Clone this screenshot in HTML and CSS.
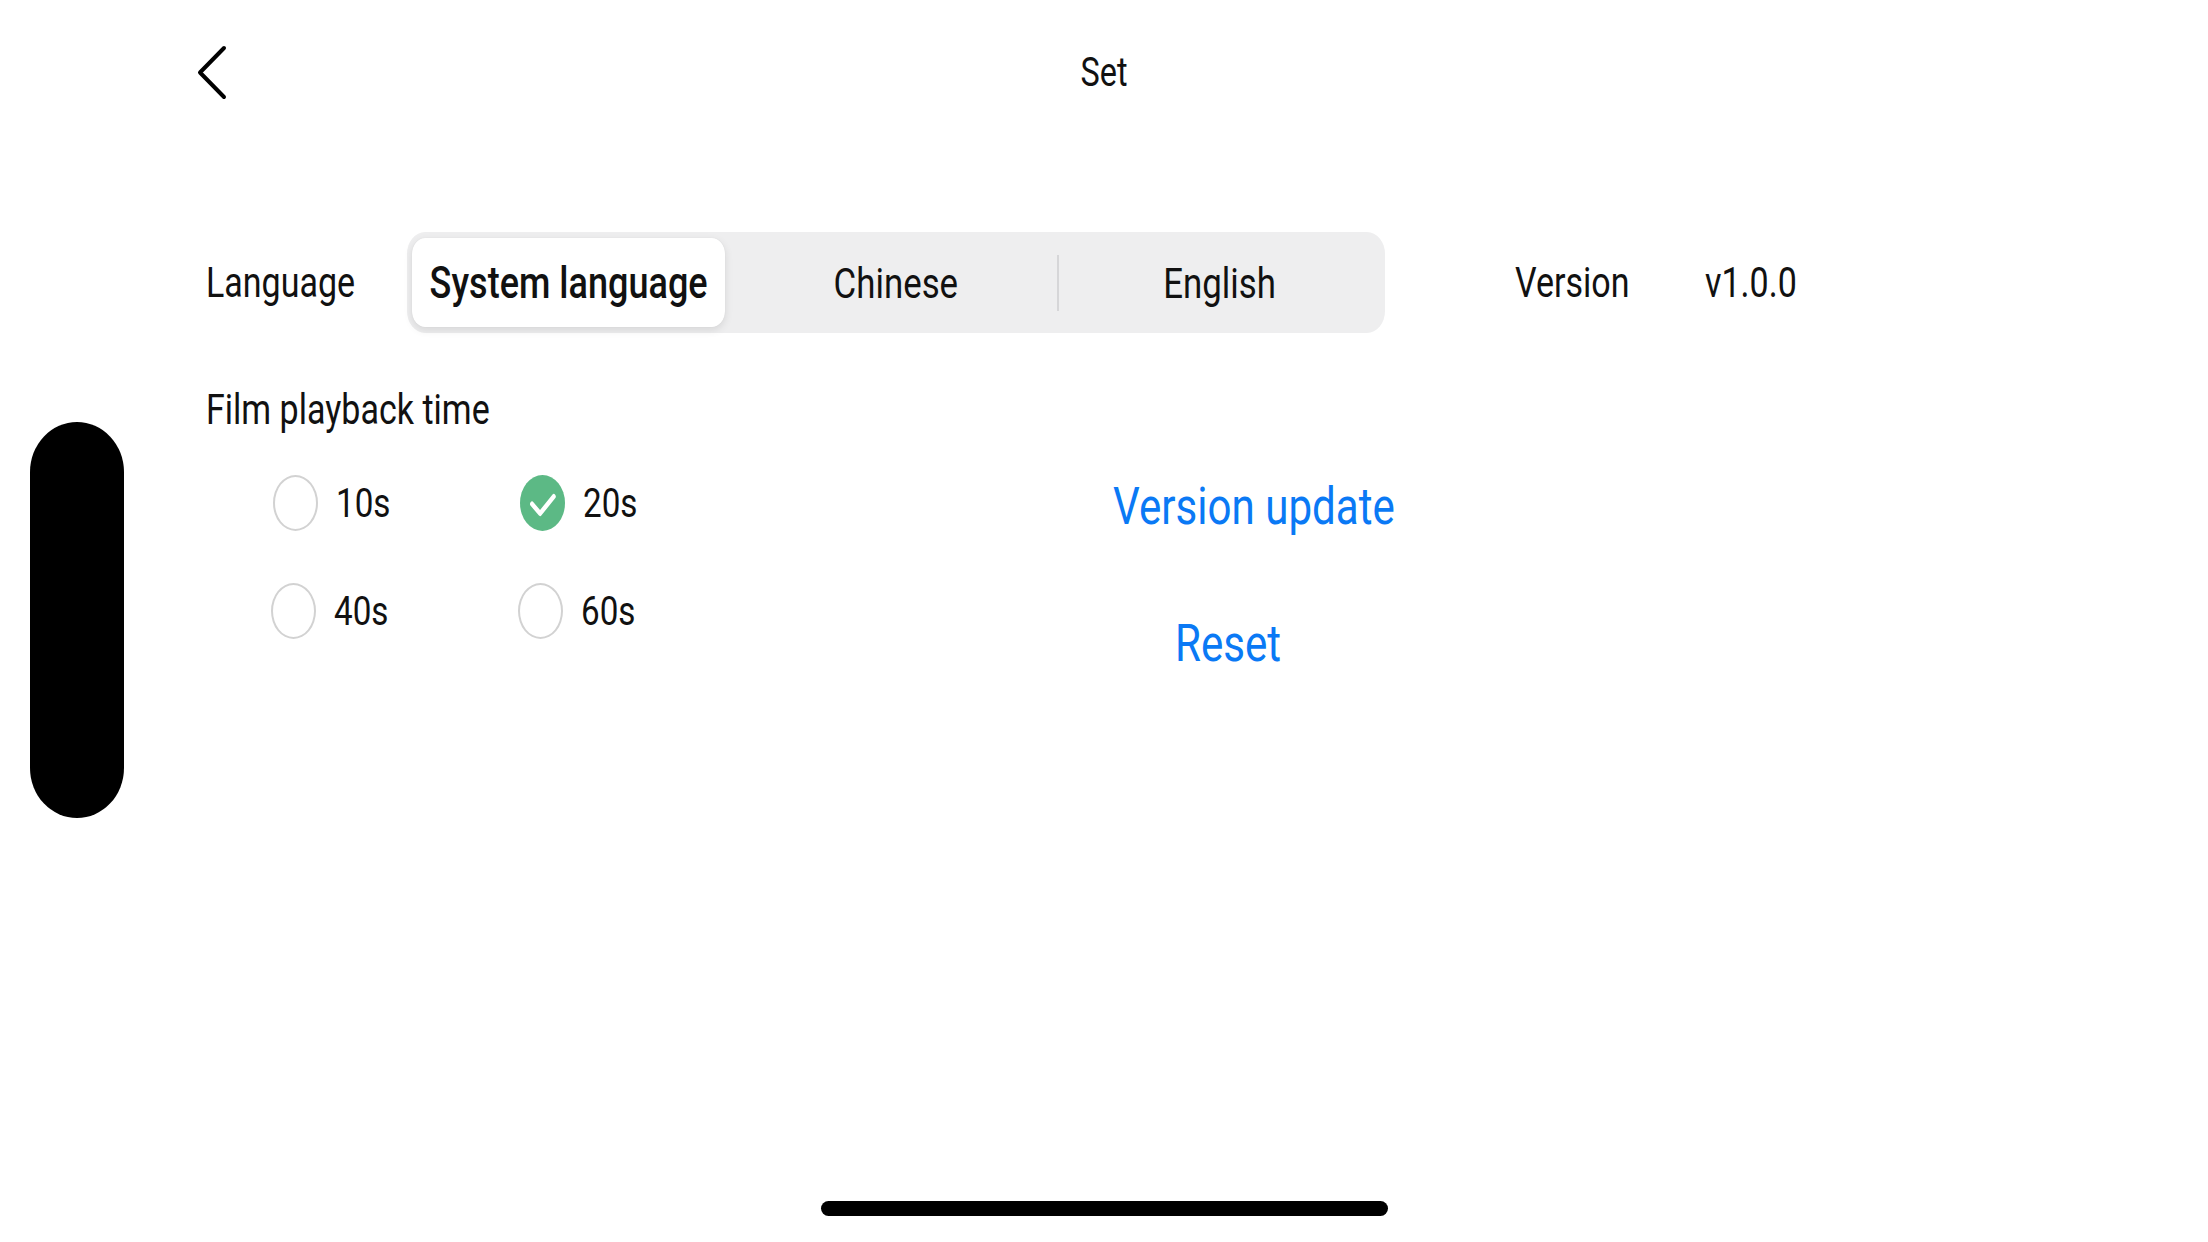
FILE: index.html
```html
<!DOCTYPE html>
<html lang="en">
<head>
<meta charset="utf-8">
<title>Set</title>
<link rel="stylesheet" href="styles.css">
</head>
<body>
<div class="screen">
  <header class="topbar">
    <div class="topbar-left">
      <svg class="back" width="32" height="57" viewBox="0 0 32 57" aria-hidden="true">
        <path d="M28 4 L4 28.5 L28 53" fill="none" stroke="#000" stroke-width="4" stroke-linecap="round" stroke-linejoin="round"/>
      </svg>
    </div>
    <h1 class="title"><span class="t t-center">Set</span></h1>
    <div class="topbar-right"></div>
  </header>

  <section class="row-lang">
    <div class="label label-lang"><span class="t">Language</span></div>
    <div class="seg">
      <div class="seg-item active"><span class="t t-center">System language</span></div>
      <div class="seg-item"><span class="t t-center">Chinese</span></div>
      <div class="seg-divider"></div>
      <div class="seg-item"><span class="t t-center">English</span></div>
    </div>
    <div class="meta">
      <div class="label meta-label"><span class="t">Version</span></div>
      <div class="label"><span class="t">v1.0.0</span></div>
    </div>
  </section>

  <div class="label section-title"><span class="t">Film playback time</span></div>

  <section class="options">
    <div class="radios">
      <div class="radio"><span class="dot"></span><span class="radio-text t">10s</span></div>
      <div class="radio"><span class="dot checked"><svg width="45" height="56" viewBox="0 0 56 56" preserveAspectRatio="none" aria-hidden="true"><polyline points="15,29 25,38.5 42,21.5" fill="none" stroke="#fff" stroke-width="5" stroke-linecap="round" stroke-linejoin="round"/></svg></span><span class="radio-text t">20s</span></div>
      <div class="radio radio-shift"><span class="dot"></span><span class="radio-text t">40s</span></div>
      <div class="radio radio-shift"><span class="dot"></span><span class="radio-text t">60s</span></div>
    </div>
    <div class="actions">
      <div class="link"><span class="t">Version update</span></div>
      <div class="link link-reset"><span class="t">Reset</span></div>
    </div>
  </section>

  <div class="island"></div>
  <div class="home-bar"></div>
</div>
</body>
</html>
```

FILE: styles.css
```css
html, body {
  margin: 0;
  padding: 0;
  width: 2208px;
  height: 1242px;
  overflow: hidden;
  background: #ffffff;
}

.screen {
  position: relative;
  width: 2208px;
  height: 1242px;
  font-family: Roboto, "Liberation Sans", Arial, sans-serif;
  color: #111;
}

/* text in this UI is horizontally condensed */
.t {
  display: inline-block;
  white-space: nowrap;
  transform: scaleX(0.81);
  transform-origin: left center;
}

.t-center {
  transform-origin: center center;
}

.topbar {
  height: 144px;
  display: grid;
  grid-template-columns: 1fr auto 1fr;
  align-items: center;
}

.topbar-left {
  display: flex;
  align-items: center;
  padding-left: 196px;
}

.back {
  display: block;
}

.title {
  margin: 0;
  font-size: 40px;
  font-weight: 400;
  line-height: 48px;
  padding-top: 2px;
  color: #111;
}

.label {
  font-size: 42px;
  line-height: 48px;
  color: #111;
}

.row-lang {
  margin-top: 88px;
  display: flex;
  align-items: center;
  padding-left: 206px;
}

.label-lang {
  width: 201px;
  flex: none;
}

.seg {
  width: 978px;
  height: 101px;
  flex: none;
  box-sizing: border-box;
  padding: 6px 5px;
  background: #eeeeef;
  border-radius: 18px / 22px;
  display: flex;
  align-items: center;
}

.seg-item {
  flex: 1 1 0;
  min-width: 0;
  height: 89px;
  display: flex;
  align-items: center;
  justify-content: center;
  font-size: 43px;
  color: #111;
  border-radius: 13px / 16px;
}

.seg-item.active {
  flex: 0 0 313px;
  margin-right: 10px;
  background: #ffffff;
  font-size: 44.5px;
  font-weight: 500;
  box-shadow: 0 3px 8px rgba(0, 0, 0, 0.10), 0 0 1px rgba(0, 0, 0, 0.10);
}

.seg-divider {
  flex: none;
  width: 2px;
  height: 56px;
  background: #d6d6d8;
}

.meta {
  margin-left: 130px;
  display: flex;
  align-items: center;
}

.meta-label {
  width: 190px;
}

.section-title {
  margin-top: 53px;
  padding-left: 206px;
}

.options {
  margin-top: 41px;
  display: flex;
  align-items: flex-start;
  padding-left: 206px;
}

.radios {
  margin-left: 65px;
  display: grid;
  grid-template-columns: 247px 247px;
  row-gap: 52px;
}

.radio {
  display: flex;
  align-items: center;
  gap: 18px;
  height: 56px;
  padding-left: 2px;
}

.radio-shift {
  padding-left: 0;
}

.dot {
  width: 45px;
  height: 56px;
  box-sizing: border-box;
  border: 2px solid #d2d2d2;
  border-radius: 50%;
  flex: none;
}

.dot.checked {
  border: none;
  background: #5cb985;
}

.dot.checked svg {
  display: block;
}

.radio-text {
  font-size: 41px;
  line-height: 48px;
  color: #111;
}

.actions {
  margin-left: 348px;
  margin-top: 2px;
  display: flex;
  flex-direction: column;
  align-items: flex-start;
}

.link {
  font-size: 52px;
  line-height: 60px;
  color: #0a79f5;
}

.link-reset {
  margin-top: 77px;
  margin-left: 62px;
}

.island {
  position: absolute;
  left: 30px;
  top: 422px;
  width: 94px;
  height: 396px;
  background: #000;
  border-radius: 47px / 50px;
}

.home-bar {
  position: absolute;
  left: 821px;
  top: 1201px;
  width: 567px;
  height: 15px;
  background: #000;
  border-radius: 8px;
}
```
